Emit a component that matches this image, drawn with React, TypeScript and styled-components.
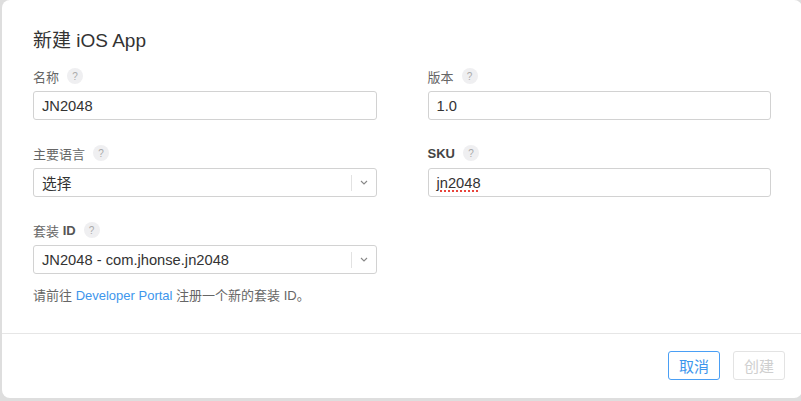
import React from "react";
import styled, { createGlobalStyle } from "styled-components";

const GlobalStyle = createGlobalStyle`
  html, body {
    margin: 0;
    padding: 0;
    overflow: hidden;
    background: #dedede;
  }
  body {
    font-family: "Liberation Sans", "Noto Sans CJK SC", sans-serif;
  }
`;

const Dialog = styled.div`
  margin-left: 2px;
  width: 800px;
  height: 398px;
  background: #fff;
  border-radius: 8px;
  display: flex;
  flex-direction: column;
  box-sizing: border-box;
`;

const Body = styled.div`
  padding: 29px 31px 27px;
  border-bottom: 1px solid #e6e6e6;
`;

const Title = styled.h1`
  margin: 0 0 13px;
  font-size: 19px;
  line-height: 24px;
  font-weight: normal;
  color: #333;
`;

const Grid = styled.div`
  display: grid;
  grid-template-columns: 1fr 1fr;
  column-gap: 51px;
  row-gap: 23px;
`;

const Group = styled.div`
  display: flex;
  flex-direction: column;
  gap: 5px;
`;

const Label = styled.div`
  display: flex;
  align-items: center;
  height: 20px;
  font-size: 13px;
  color: #666;
`;

const Strong = styled.span<{ $dark?: boolean }>`
  font-weight: bold;
  color: ${(p) => (p.$dark ? "#444" : "#555")};
`;

const Help = styled.span`
  display: inline-flex;
  align-items: center;
  justify-content: center;
  width: 16px;
  height: 16px;
  margin-left: 8px;
  border-radius: 50%;
  background: #efeff1;
  color: #aaa;
  font-size: 10px;
`;

const Box = styled.div`
  height: 29px;
  box-sizing: border-box;
  border: 1px solid #d2d2d2;
  border-radius: 3px;
  display: flex;
  align-items: center;
  padding-left: 8px;
  font-size: 14.7px;
  color: #333;
`;

const Value = styled.span`
  flex: 1;
`;

const Misspelled = styled.span`
  text-decoration: underline dotted #e8453c;
  text-decoration-thickness: 2px;
  text-underline-offset: 3px;
`;

const Arrow = styled.span`
  display: flex;
  align-items: center;
  justify-content: center;
  width: 24px;
  height: 16px;
  border-left: 1px solid #e2e2e2;
`;

const Note = styled.div`
  grid-column: 1;
  margin-top: -11px;
  font-size: 13px;
  line-height: 20px;
  color: #666;
`;

const Link = styled.a`
  color: #3d96ec;
  text-decoration: none;
`;

const Footer = styled.div`
  display: flex;
  justify-content: flex-end;
  gap: 13px;
  padding: 17px 17px 0;
`;

const Button = styled.button<{ $disabled?: boolean }>`
  height: 29px;
  padding: 0 10px;
  border-radius: 3px;
  background: #fff;
  font-family: inherit;
  font-size: 15px;
  border: 1px solid ${(p) => (p.$disabled ? "#e3e3e3" : "#4a9ff5")};
  color: ${(p) => (p.$disabled ? "#cfcfcf" : "#3d96ec")};
`;

const Chevron = () => (
  <svg width="8" height="5" viewBox="0 0 8 5">
    <path d="M1 1l3 3 3-3" fill="none" stroke="#888" strokeWidth="1.1" />
  </svg>
);

const Field = ({ label, children }: { label: React.ReactNode; children: React.ReactNode }) => (
  <Group>
    <Label>
      {label}
      <Help>?</Help>
    </Label>
    {children}
  </Group>
);

export default function App() {
  return (
    <>
      <GlobalStyle />
      <Dialog>
        <Body>
          <Title>新建 iOS App</Title>
          <Grid>
            <Field label="名称">
              <Box>JN2048</Box>
            </Field>
            <Field label="版本">
              <Box>1.0</Box>
            </Field>
            <Field label="主要语言">
              <Box>
                <Value>选择</Value>
                <Arrow>
                  <Chevron />
                </Arrow>
              </Box>
            </Field>
            <Field label={<Strong $dark>SKU</Strong>}>
              <Box>
                <Misspelled>jn2048</Misspelled>
              </Box>
            </Field>
            <Field
              label={
                <>
                  套装&nbsp;<Strong>ID</Strong>
                </>
              }
            >
              <Box>
                <Value>JN2048 - com.jhonse.jn2048</Value>
                <Arrow>
                  <Chevron />
                </Arrow>
              </Box>
            </Field>
            <Note>
              请前往 <Link href="#">Developer Portal</Link> 注册一个新的套装 ID。
            </Note>
          </Grid>
        </Body>
        <Footer>
          <Button>取消</Button>
          <Button $disabled>创建</Button>
        </Footer>
      </Dialog>
    </>
  );
}
